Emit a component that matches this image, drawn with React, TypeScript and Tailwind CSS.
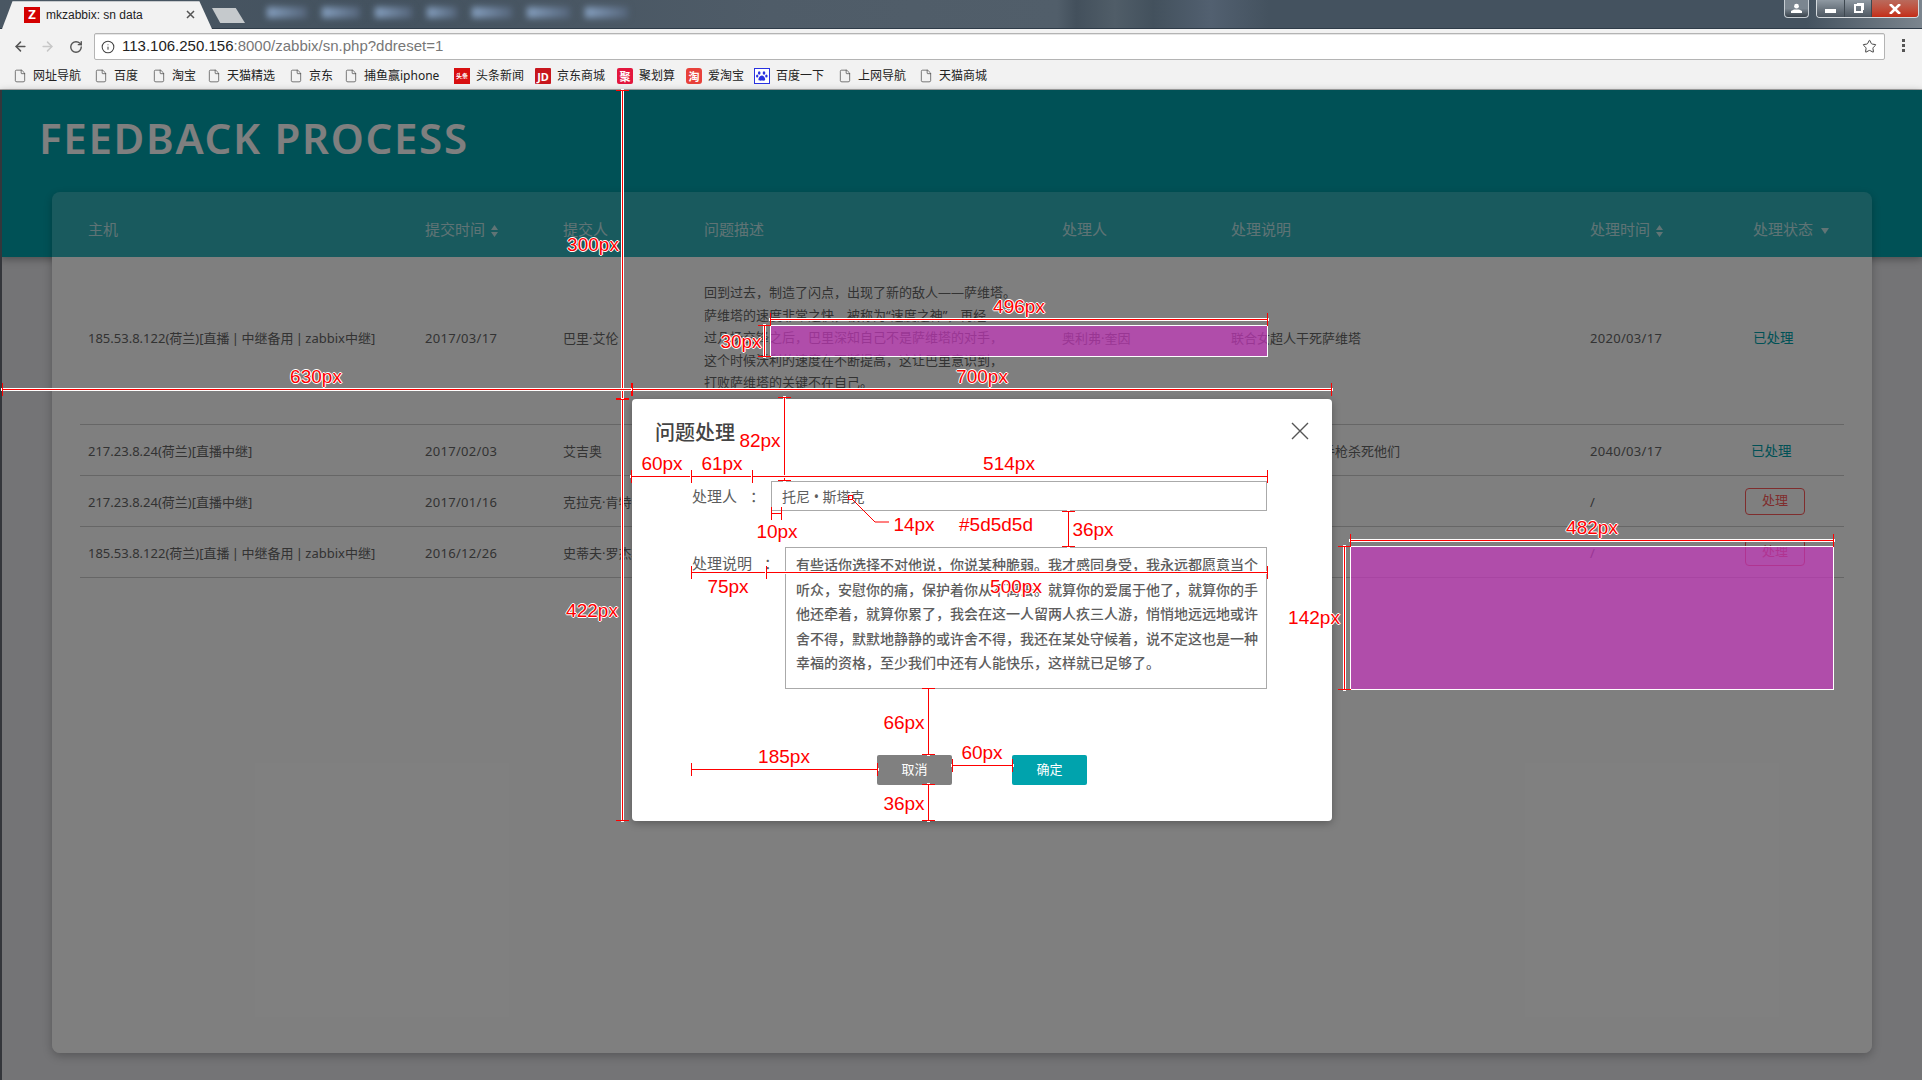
import React from "react";
import { ArrowLeft, ArrowRight, RotateCw, Info, Star, File } from "lucide-react";

const cols = "grid grid-cols-[337px_138px_141px_358px_169px_359px_163px_1fr] pl-2";

function Sort() {
  return (
    <svg width="7" height="12" viewBox="0 0 7 12" className="ml-[6px] inline-block fill-current">
      <path d="M3.5 0 7 5H0zM3.5 12 0 7h7z" />
    </svg>
  );
}

function H({ c }: { c: string }) {
  return (
    <div className={`absolute h-px bg-[#ff0000] shadow-[0_0_0_1px_#ffffff] ${c}`}>
      <div className="absolute -top-[6px] left-0 h-[13px] w-px bg-[#ff0000]" />
      <div className="absolute -top-[6px] right-0 h-[13px] w-px bg-[#ff0000]" />
    </div>
  );
}

function V({ c }: { c: string }) {
  return (
    <div className={`absolute w-px bg-[#ff0000] shadow-[0_0_0_1px_#ffffff] ${c}`}>
      <div className="absolute -left-[6px] top-0 h-px w-[13px] bg-[#ff0000]" />
      <div className="absolute -left-[6px] bottom-0 h-px w-[13px] bg-[#ff0000]" />
    </div>
  );
}

function L({ c, children }: { c: string; children: React.ReactNode }) {
  return (
    <div
      className={`absolute -translate-x-1/2 -translate-y-[55%] whitespace-nowrap font-['Liberation_Sans',sans-serif] text-[19px] leading-none text-[#ff0000] [text-shadow:1px_0_#fff,-1px_0_#fff,0_1px_#fff,0_-1px_#fff] ${c}`}
    >
      {children}
    </div>
  );
}

function Bm({ icon, label, w }: { icon?: React.ReactNode; label: string; w: string }) {
  return (
    <div className={`flex items-center gap-[6px] ${w}`}>
      {icon ?? <File size={14} strokeWidth={1.2} className="shrink-0 text-[#444]" />}
      <span className="whitespace-nowrap text-[12px] text-[#222]">{label}</span>
    </div>
  );
}

function Sq({ c, t }: { c: string; t: string }) {
  return (
    <span className={`flex h-4 w-4 shrink-0 items-center justify-center text-[11px] font-bold leading-none text-white ${c}`}>{t}</span>
  );
}

function Blob({ w }: { w: string }) {
  return <div className={`h-[11px] bg-gradient-to-r from-[#86a0c0] to-[#55657a] ${w}`} />;
}

export default function App() {
  return (
    <div className="relative flex h-[1080px] w-[1922px] flex-col overflow-hidden font-['Noto_Sans','Noto_Sans_CJK_SC',sans-serif]">
      {/* tab strip */}
      <div className="flex h-[29px] shrink-0 items-start justify-between border-b border-[#2e3b48] bg-[linear-gradient(90deg,#4a5763_0%,#44525f_20%,#4f5c68_40%,#515e6a_55%,#43505c_56%,#505d68_58%,#43515d_60%,#526070_63%,#44525f_66%,#44525f_94%,#7b858e_100%)]">
        <div className="flex items-start">
          <div className="ml-[2px] flex h-[29px] w-[210px] items-center bg-[#f2f2f2] pl-[22px] [clip-path:polygon(0_100%,5%_4%,94%_4%,100%_100%)]">
            <span className="flex h-4 w-4 items-center justify-center bg-[#d40000] text-[13px] font-bold text-white">Z</span>
            <span className="ml-[6px] font-['Liberation_Sans',sans-serif] text-[12px] text-[#222]">mkzabbix: sn data</span>
            <svg width="9" height="9" viewBox="0 0 9 9" className="ml-[43px] stroke-[#555] stroke-[1.5]">
              <path d="M1 1l7 7M8 1 1 8" />
            </svg>
          </div>
          <div className="mt-2 h-[15px] w-[33px] bg-[#c5c9cc] [clip-path:polygon(0_0,72%_0,100%_100%,25%_100%)]" />
          <div className="ml-[22px] mt-[7px] flex gap-[15px] blur-[3px]">
            <Blob w="w-[40px]" />
            <Blob w="w-[38px]" />
            <Blob w="w-[37px]" />
            <Blob w="w-[30px]" />
            <Blob w="w-[40px]" />
            <Blob w="w-[43px]" />
            <Blob w="w-[43px]" />
          </div>
        </div>
        <div className="mr-[3px] flex items-start gap-[7px]">
          <div className="flex h-[18px] w-[25px] items-center justify-center rounded-b-[4px] border border-t-0 border-[#c5ccd2] bg-gradient-to-b from-[#7b8690] via-[#7b8690] to-[#39434c]">
            <svg width="11" height="11" viewBox="0 0 11 11" className="fill-white">
              <circle cx="5.5" cy="3.2" r="2.4" />
              <path d="M0 10V8l3-1.5h5l3 1.5v2z" />
            </svg>
          </div>
          <div className="flex h-[18px] overflow-hidden rounded-b-[4px] border border-t-0 border-[#d5dade]">
            <div className="flex w-[28px] items-center justify-center border-r border-[#3e4850] bg-gradient-to-b from-[#8f99a2] to-[#4d5761]">
              <div className="mt-1 h-[4px] w-[11px] bg-white" />
            </div>
            <div className="flex w-[27px] items-center justify-center border-r border-[#3e4850] bg-gradient-to-b from-[#8f99a2] to-[#4d5761]">
              <div className="h-[9px] w-[9px] border-2 border-white shadow-[2px_-2px_0_-1px_#ffffff]" />
            </div>
            <div className="flex w-[46px] items-center justify-center bg-gradient-to-b from-[#b96a5c] to-[#c42b14]">
              <svg width="12" height="10" viewBox="0 0 12 10" className="stroke-white stroke-[2.6]">
                <path d="M1 0l10 10M11 0 1 10" />
              </svg>
            </div>
          </div>
        </div>
      </div>

      {/* toolbar */}
      <div className="flex h-[34px] shrink-0 items-start bg-[#f2f2f2] pt-[4px]">
        <div className="flex h-[27px] w-[94px] items-center pl-[13px]">
          <ArrowLeft size={15} strokeWidth={2.4} className="text-[#555]" />
          <ArrowRight size={15} strokeWidth={2.4} className="ml-[12px] text-[#c8c8c8]" />
          <RotateCw size={14} strokeWidth={2.4} className="ml-[14px] text-[#555]" />
        </div>
        <div className="flex h-[27px] w-[1791px] items-center rounded-[2px] border border-[#b4b4b4] bg-white pl-[6px] pr-[7px] shadow-[inset_0_1px_0_#e6e6e6]">
          <Info size={14} strokeWidth={1.8} className="text-[#444]" />
          <span className="ml-[7px] font-['Liberation_Sans',sans-serif] text-[15px] text-[#222]">
            113.106.250.156<span className="text-[#777]">:8000/zabbix/sn.php?ddreset=1</span>
          </span>
          <Star size={15} strokeWidth={1.6} className="ml-auto text-[#444]" />
        </div>
        <div className="ml-[17px] mt-[6px] flex flex-col gap-[2px]">
          <span className="h-[3px] w-[3px] bg-[#555]" />
          <span className="h-[3px] w-[3px] bg-[#555]" />
          <span className="h-[3px] w-[3px] bg-[#555]" />
        </div>
      </div>

      {/* bookmarks */}
      <div className="flex h-[27px] shrink-0 items-center border-b border-[#a9a9a9] bg-[#f2f2f2] pl-[13px]">
        <Bm label="网址导航" w="w-[81px]" />
        <Bm label="百度" w="w-[58px]" />
        <Bm label="淘宝" w="w-[55px]" />
        <Bm label="天猫精选" w="w-[82px]" />
        <Bm label="京东" w="w-[55px]" />
        <Bm label="捕鱼赢iphone" w="w-[110px]" />
        <Bm icon={<Sq c="bg-[#d80f10] !text-[6px]" t="头条" />} label="头条新闻" w="w-[81px]" />
        <Bm icon={<Sq c="bg-[#c8161d] rounded-[1px]" t="JD" />} label="京东商城" w="w-[82px]" />
        <Bm icon={<Sq c="bg-[#e3173e] rounded-[2px]" t="聚" />} label="聚划算" w="w-[69px]" />
        <Bm icon={<Sq c="bg-[#e8413a] rounded-[3px]" t="淘" />} label="爱淘宝" w="w-[68px]" />
        <Bm
          icon={
            <svg width="16" height="16" viewBox="0 0 16 16" className="shrink-0">
              <rect x="0.5" y="0.5" width="15" height="15" fill="#fff" stroke="#2932e1" />
              <g fill="#2932e1">
                <ellipse cx="5.2" cy="5" rx="1.3" ry="1.8" />
                <ellipse cx="10" cy="5" rx="1.3" ry="1.8" />
                <ellipse cx="3.2" cy="8" rx="1.2" ry="1.6" />
                <ellipse cx="12.4" cy="8" rx="1.2" ry="1.6" />
                <path d="M7.8 7.5c2 0 3.4 2.4 3.4 4 0 1.4-2 1.2-3.4 1-1.4.2-3.4.4-3.4-1 0-1.6 1.4-4 3.4-4z" />
              </g>
            </svg>
          }
          label="百度一下"
          w="w-[84px]"
        />
        <Bm label="上网导航" w="w-[81px]" />
        <Bm label="天猫商城" w="w-[80px]" />
      </div>

      {/* page */}
      <div className="relative min-h-0 flex-1 bg-[#e8e8ec]">
        <div className="h-[167px] bg-[#00a3ad] pl-[39px] pt-[18px] shadow-[0_2px_8px_rgba(0,0,0,.35)]">
          <div className="text-[42px] font-semibold leading-[60px] tracking-[1.7px] text-white">FEEDBACK PROCESS</div>
        </div>
        <div className="relative -mt-[65px] ml-[52px] h-[861px] w-[1820px] rounded-[8px] shadow-[0_3px_10px_rgba(0,0,0,.25)]">
          <div className="h-[65px] rounded-t-[8px] bg-white/20 px-7">
            <div className={`${cols} items-center pt-[27px] text-[15px] leading-[20px] text-white/70`}>
              <div>主机</div>
              <div>提交时间<Sort /></div>
              <div>提交人</div>
              <div>问题描述</div>
              <div>处理人</div>
              <div>处理说明</div>
              <div>处理时间<Sort /></div>
              <div>
                处理状态
                <svg width="8" height="6" viewBox="0 0 8 6" className="ml-[8px] inline-block fill-current">
                  <path d="M0 0h8L4 6z" />
                </svg>
              </div>
            </div>
          </div>
          <div className="h-[796px] rounded-b-[8px] bg-white px-7 text-[13px] text-[#666]">
            <div className={`${cols} h-[168px] items-center border-b border-[#ccc] pb-[4px]`}>
              <div className="[word-spacing:-1px]">185.53.8.122(荷兰)[直播 | 中继备用 | zabbix中继]</div>
              <div className="tracking-[0.3px]">2017/03/17</div>
              <div>巴里·艾伦</div>
              <div className="-mt-[2px] whitespace-nowrap leading-[22.5px]">
                回到过去，制造了闪点，出现了新的敌人——萨维塔。<br />
                萨维塔的速度非常之快，被称为“速度之神”，再经<br />
                过几场交锋之后，巴里深知自己不是萨维塔的对手，<br />
                这个时候沃利的速度在不断提高，这让巴里意识到，<br />
                打败萨维塔的关键不在自己。
              </div>
              <div>奥利弗·奎因</div>
              <div>联合女超人干死萨维塔</div>
              <div className="tracking-[0.3px]">2020/03/17</div>
              <div className="text-[13.5px] text-[#00a3ad]">已处理</div>
            </div>
            <div className={`${cols} h-[51px] items-center border-b border-[#ccc] pt-[3px]`}>
              <div>217.23.8.24(荷兰)[直播中继]</div>
              <div className="tracking-[0.3px]">2017/02/03</div>
              <div>艾吉奥</div>
              <div>刺客信条</div>
              <div>阿尔泰尔</div>
              <div>敌人来了就拿起手枪杀死他们</div>
              <div className="tracking-[0.3px]">2040/03/17</div>
              <div className="-ml-[2px] text-[13.5px] text-[#00a3ad]">已处理</div>
            </div>
            <div className={`${cols} h-[51px] items-center border-b border-[#ccc] pt-[3px]`}>
              <div>217.23.8.24(荷兰)[直播中继]</div>
              <div className="tracking-[0.3px]">2017/01/16</div>
              <div>克拉克·肯特</div>
              <div />
              <div />
              <div />
              <div>/</div>
              <div>
                <div className="-mb-[1px] -ml-2 -mt-[4px] flex h-[27px] w-[60px] items-center justify-center rounded-[4px] border border-[#ff5a5a] text-[13px] text-[#ff5a5a]">处理</div>
              </div>
            </div>
            <div className={`${cols} h-[51px] items-center border-b border-[#ccc] pt-[3px]`}>
              <div className="[word-spacing:-1px]">185.53.8.122(荷兰)[直播 | 中继备用 | zabbix中继]</div>
              <div className="tracking-[0.3px]">2016/12/26</div>
              <div>史蒂夫·罗杰斯</div>
              <div />
              <div />
              <div />
              <div>/</div>
              <div>
                <div className="-mb-[1px] -ml-2 -mt-[4px] flex h-[27px] w-[60px] items-center justify-center rounded-[4px] border border-[#ff5a5a] text-[13px] text-[#ff5a5a]">处理</div>
              </div>
            </div>
          </div>
        </div>

        {/* dim layer */}
        <div className="absolute inset-0 bg-black/50" />

        {/* purple measuring boxes */}
        <div className="absolute left-[770px] top-[235px] h-[32px] w-[498px] border border-white bg-[#c537bc]/70" />
        <div className="absolute left-[1350px] top-[456px] h-[144px] w-[484px] border border-white bg-[#c537bc]/70" />

        {/* modal */}
        <div className="absolute left-[632px] top-[309px] h-[422px] w-[700px] rounded-[4px] bg-white shadow-[0_2px_8px_rgba(0,0,0,.3)]">
          <div className="relative h-[82px] pl-[23px] pt-[20px] text-[20px] font-medium leading-[28px] text-[#444]">
            问题处理
            <svg width="18" height="18" viewBox="0 0 18 18" className="absolute right-[23px] top-[23px] stroke-[#555] stroke-[1.4]">
              <path d="M1 1l16 16M17 1 1 17" />
            </svg>
          </div>
          <div className="flex pl-[60px] text-[15px] text-[#5d5d5d]">
            <div className="flex h-[30px] w-[79px] items-center whitespace-nowrap">处理人<span className="ml-[13px]">：</span></div>
            <div className="flex h-[30px] w-[496px] items-center border border-[#aaa] pl-[10px] text-[14px]">托尼 • 斯塔克</div>
          </div>
          <div className="mt-9 flex pl-[60px] text-[15px] text-[#5d5d5d]">
            <div className="w-[93px] whitespace-nowrap pt-[4px] leading-[24px]">处理说明<span className="ml-[12px]">：</span></div>
            <div className="h-[142px] w-[482px] whitespace-nowrap border border-[#aaa] py-[5px] pl-[10px] text-[14px] font-medium leading-[24.6px]">
              有些话你选择不对他说，你说某种脆弱。我才感同身受，我永远都愿意当个<br />
              听众，安慰你的痛，保护着你从不离去。就算你的爱属于他了，就算你的手<br />
              他还牵着，就算你累了，我会在这一人留两人疚三人游，悄悄地远远地或许<br />
              舍不得，默默地静静的或许舍不得，我还在某处守候着，说不定这也是一种<br />
              幸福的资格，至少我们中还有人能快乐，这样就已足够了。
            </div>
          </div>
          <div className="mt-[66px] flex gap-[60px] pl-[245px] text-[13px] text-white">
            <div className="flex h-[30px] w-[75px] items-center justify-center rounded-[2px] bg-[#808080]">取消</div>
            <div className="flex h-[30px] w-[75px] items-center justify-center rounded-[2px] bg-[#00a3ad]">确定</div>
          </div>
        </div>
        <div className="absolute bottom-0 left-0 top-0 w-[2px] bg-[#34363b]" />
      </div>

      {/* measurement annotations */}
      <div className="pointer-events-none absolute inset-0">
        <V c="left-[622px] top-[90px] h-[309px]" />
        <V c="left-[622px] top-[399px] h-[422px]" />
        <H c="left-[2px] top-[389px] w-[630px]" />
        <H c="left-[632px] top-[389px] w-[700px]" />
        <H c="left-[770px] top-[319px] w-[498px]" />
        <V c="left-[764px] top-[325px] h-[32px]" />
        <V c="left-[784px] top-[397px] h-[84px]" />
        <H c="left-[631px] top-[476px] w-[61px]" />
        <H c="left-[691px] top-[476px] w-[62px]" />
        <H c="left-[752px] top-[476px] w-[516px]" />
        <H c="left-[771px] top-[513px] w-[11px]" />
        <V c="left-[1068px] top-[511px] h-[36px]" />
        <H c="left-[691px] top-[572px] w-[76px]" />
        <H c="left-[766px] top-[572px] w-[502px]" />
        <V c="left-[928px] top-[688px] h-[67px]" />
        <H c="left-[691px] top-[769px] w-[187px]" />
        <H c="left-[952px] top-[765px] w-[61px]" />
        <V c="left-[928px] top-[784px] h-[37px]" />
        <V c="left-[1344px] top-[546px] h-[144px]" />
        <H c="left-[1350px] top-[540px] w-[484px]" />
        <svg width="50" height="30" viewBox="0 0 50 30" className="absolute left-[848px] top-[495px] fill-none stroke-[#ff0000]">
          <rect x="0.5" y="0.5" width="4" height="4" />
          <path d="M4 4 27 27H41" />
        </svg>

        <L c="left-[593px] top-[245px]">300px</L>
        <L c="left-[592px] top-[611px]">422px</L>
        <L c="left-[316px] top-[377px]">630px</L>
        <L c="left-[982px] top-[377px]">700px</L>
        <L c="left-[1019px] top-[307px]">496px</L>
        <L c="left-[741px] top-[342px]">30px</L>
        <L c="left-[760px] top-[441px]">82px</L>
        <L c="left-[662px] top-[464px]">60px</L>
        <L c="left-[722px] top-[464px]">61px</L>
        <L c="left-[1009px] top-[464px]">514px</L>
        <L c="left-[777px] top-[532px]">10px</L>
        <L c="left-[914px] top-[525px]">14px</L>
        <L c="left-[996px] top-[525px]">#5d5d5d</L>
        <L c="left-[1093px] top-[530px]">36px</L>
        <L c="left-[728px] top-[587px]">75px</L>
        <L c="left-[1016px] top-[587px]">500px</L>
        <L c="left-[904px] top-[723px]">66px</L>
        <L c="left-[784px] top-[757px]">185px</L>
        <L c="left-[982px] top-[753px]">60px</L>
        <L c="left-[904px] top-[804px]">36px</L>
        <L c="left-[1314px] top-[618px]">142px</L>
        <L c="left-[1592px] top-[528px]">482px</L>
      </div>
    </div>
  );
}
